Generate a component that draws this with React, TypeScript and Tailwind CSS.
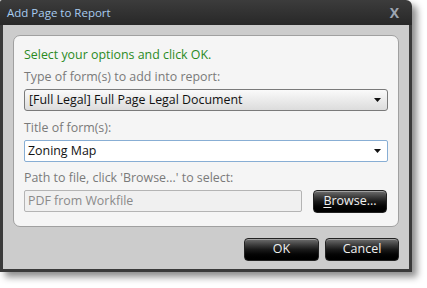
import React from 'react';

const FONT = "font-['Open_Sans','Noto_Sans',sans-serif]";

const Arrow: React.FC = () => (
  <svg width="7" height="4" viewBox="0 0 7 4" className="shrink-0">
    <path d="M0 0h7L3.5 4z" fill="#111" />
  </svg>
);

const DarkButton: React.FC<{ children: React.ReactNode; className?: string }> = ({ children, className = '' }) => (
  <button
    className={`h-[23px] rounded-[4px] border border-[#222] bg-gradient-to-b from-[#707070] via-[#1a1a1a] to-[#000] text-[12.5px] leading-none text-[#f0f0f0] shadow-[inset_0_1px_0_rgba(255,255,255,0.35)] ${className}`}
  >
    {children}
  </button>
);

const App: React.FC = () => {
  return (
    <div className={`w-[427px] h-[288px] bg-white ${FONT}`}>
      <div className="w-[412px] h-[272px] flex flex-col rounded-tr-[6px] rounded-tl-[2px] overflow-hidden shadow-[5px_5px_7px_rgba(0,0,0,0.45)]">
        {/* Title bar */}
        <div className="h-[25px] shrink-0 flex items-center justify-between pl-[7px] pr-[13px] bg-gradient-to-b from-[#3c3c3c] to-[#282828]">
          <span className="text-[11.5px] text-[#a8ccf0] leading-none">Add Page to Report</span>
          <span className="text-[14px] font-bold text-[#9ea6b2] leading-none">X</span>
        </div>

        {/* Body */}
        <div className="flex-1 flex flex-col bg-[#cccccc] border-x-[3px] border-b-[3px] border-[#3a3a3a] px-[10px] pt-[10px]">
          <div className="h-[192px] rounded-[7px] border border-[#a0a0a0] bg-[#f5f5f5] px-[10px] pt-[10px]">
            <div className="h-[18px] text-[12.4px] leading-[18px] text-[#2a8a1e]">Select your options and click OK.</div>

            <div className="mt-[4px] h-[18px] text-[12.4px] leading-[18px] text-[#7a7a7a]">Type of form(s) to add into report:</div>
            <div className="mt-[3px] h-[22px] flex items-center justify-between rounded-[3px] border border-[#7a7a7a] bg-gradient-to-b from-[#fafafa] to-[#dcdcdc] pl-[4px] pr-[6px]">
              <span className="text-[12.4px] text-[#111]">[Full Legal] Full Page Legal Document</span>
              <Arrow />
            </div>

            <div className="mt-[8px] h-[18px] text-[12.4px] leading-[18px] text-[#7a7a7a]">Title of form(s):</div>
            <div className="mt-[3px] h-[22px] flex items-center justify-between rounded-[2px] border border-[#88aed4] bg-white pl-[3px] pr-[6px]">
              <span className="text-[12.4px] text-[#111]">Zoning Map</span>
              <Arrow />
            </div>

            <div className="mt-[7px] h-[18px] text-[12.4px] leading-[18px] text-[#7a7a7a]">Path to file, click 'Browse...' to select:</div>
            <div className="mt-[3px] flex gap-[11px]">
              <div className="w-[278px] h-[22px] flex items-center rounded-[2px] border border-[#b4b4b4] bg-[#f0f0f0] pl-[3px]">
                <span className="text-[12.4px] text-[#8a8a8a]">PDF from Workfile</span>
              </div>
              <DarkButton className="w-[74px]">
                <span className="underline underline-offset-2">B</span>rowse...
              </DarkButton>
            </div>
          </div>

          <div className="mt-[11px] flex justify-end gap-[6px]">
            <DarkButton className="w-[75px]">OK</DarkButton>
            <DarkButton className="w-[74px]">Cancel</DarkButton>
          </div>
        </div>
      </div>
    </div>
  );
};

export default App;
